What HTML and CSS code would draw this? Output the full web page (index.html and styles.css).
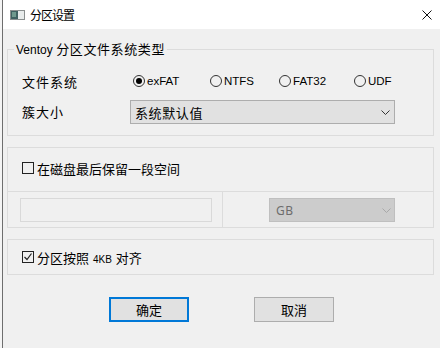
FILE: index.html
```html
<!DOCTYPE html>
<html lang="zh-CN">
<head>
    <meta charset="UTF-8">
    <title>分区设置</title>
    <link rel="stylesheet" href="styles.css">
</head>
<body>

<div class="window">
    <div class="titlebar">
        <svg class="app-icon" width="15" height="10" viewBox="0 0 15 10">
            <rect x="0.5" y="0.5" width="14" height="9" fill="#e8ecec" stroke="#8a8f8f"/>
            <rect x="1" y="1" width="7" height="8" fill="#3f6262"/>
            <rect x="2" y="2" width="4" height="5" fill="#6f9a8e"/>
        </svg>
        <span class="title">分区设置</span>
        <svg class="close" width="10" height="10" viewBox="0 0 10 10">
            <path d="M0.5 0.5 L9.5 9.5 M9.5 0.5 L0.5 9.5" stroke="#111" stroke-width="1"/>
        </svg>
    </div>

    <div class="content">
        <!-- 文件系统类型 -->
        <div class="group fs-group">
            <div class="group-title"><span class="latin">Ventoy</span> 分区文件系统类型</div>
            <div class="fs-rows">
                <div class="row">
                    <span class="row-label">文件系统</span>
                    <div class="radios">
                        <label class="radio"><span class="radio-circle checked"></span>exFAT</label>
                        <label class="radio"><span class="radio-circle"></span>NTFS</label>
                        <label class="radio"><span class="radio-circle"></span>FAT32</label>
                        <label class="radio"><span class="radio-circle"></span>UDF</label>
                    </div>
                </div>
                <div class="row">
                    <span class="row-label">簇大小</span>
                    <div class="combo">
                        <span>系统默认值</span>
                        <svg width="9" height="5" viewBox="0 0 9 5"><polyline points="0.5,0.5 4.5,4.5 8.5,0.5" fill="none" stroke="#333" stroke-width="1"/></svg>
                    </div>
                </div>
            </div>
        </div>

        <!-- 保留空间 -->
        <div class="group reserve">
            <div class="reserve-top">
                <span class="check"></span>
                <span>在磁盘最后保留一段空间</span>
            </div>
            <div class="reserve-bottom">
                <div class="cell cell-left">
                    <div class="text-input"></div>
                </div>
                <div class="cell cell-right">
                    <div class="combo combo-disabled">
                        <span>GB</span>
                        <svg width="9" height="5" viewBox="0 0 9 5"><polyline points="0.5,0.5 4.5,4.5 8.5,0.5" fill="none" stroke="#a8a8a8" stroke-width="1"/></svg>
                    </div>
                </div>
            </div>
        </div>

        <!-- 4KB 对齐 -->
        <div class="group align">
            <span class="check checked">
                <svg width="10" height="10" viewBox="0 0 10 10"><polyline points="1.5,5 4,7.5 8.5,1.5" fill="none" stroke="#222" stroke-width="1.2"/></svg>
            </span>
            <span>分区按照 <span class="small">4KB</span> 对齐</span>
        </div>

        <div class="buttons">
            <button class="btn btn-default">确定</button>
            <button class="btn">取消</button>
        </div>
    </div>
</div>

</body>
</html>
```

FILE: styles.css
```css
/* Dasar */
* {
    margin: 0;
    padding: 0;
    box-sizing: border-box;
}

body {
    width: 440px;
    height: 348px;
    overflow: hidden;
    background: #f4f4f4;
    font-family: "Noto Sans CJK SC", sans-serif;
    font-size: 13px;
    color: #000;
}

.window {
    margin-left: 2px;
    height: 348px;
    border-left: 1px solid #6e6e6e;
    background: #f0f0f0;
}

/* Title bar */
.titlebar {
    height: 29px;
    background: #fff;
    display: flex;
    align-items: center;
    padding-left: 7px;
}

.app-icon {
    display: block;
    margin-right: 5px;
}

.title {
    font-size: 12px;
    letter-spacing: -1px;
    line-height: 16px;
}

.close {
    display: block;
    margin-left: auto;
    margin-right: 8px;
}

/* Content */
.content {
    padding: 0 6px 0 4px;
}

.group {
    border: 1px solid #dcdcdc;
}

.group-title {
    width: fit-content;
    margin: -9px 0 0 6px;
    padding: 0 2px;
    line-height: 16px;
    background: #f0f0f0;
    letter-spacing: 0.6px;
}

.latin {
    font-family: "Liberation Sans", sans-serif;
    font-size: 12px;
    letter-spacing: 0;
}

.fs-group {
    margin-top: 20px;
    padding-bottom: 11px;
}

.fs-rows {
    display: grid;
    row-gap: 6px;
    padding: 12px 0 0 14px;
}

.row {
    display: flex;
    align-items: center;
    height: 24px;
}

.row-label {
    width: 108px;
    letter-spacing: 1px;
    line-height: 16px;
}

.radios {
    display: grid;
    grid-template-columns: 77px 69px 75px auto;
    margin-left: 3px;
    margin-top: -3px;
}

.radio {
    display: flex;
    align-items: center;
    gap: 2px;
    font-family: "Liberation Sans", sans-serif;
    font-size: 11.5px;
}

.radio-circle {
    width: 12px;
    height: 12px;
    border: 1px solid #333;
    border-radius: 50%;
    display: flex;
    align-items: center;
    justify-content: center;
}

.radio-circle.checked::after {
    content: "";
    width: 6px;
    height: 6px;
    border-radius: 50%;
    background: #000;
}

/* Combo */
.combo {
    width: 265px;
    height: 24px;
    background: #e1e1e1;
    border: 1px solid #adadad;
    display: flex;
    align-items: center;
    justify-content: space-between;
    padding: 0 4px 0 4px;
    letter-spacing: 0.6px;
}

.combo svg {
    display: block;
}

.combo-disabled {
    width: 126px;
    background: #cccccc;
    border-color: #bfbfbf;
    color: #6d6d6d;
    font-family: "Noto Sans", sans-serif;
    font-size: 12px;
    padding: 0 3px 0 6px;
}

/* Reserve */
.reserve {
    margin-top: 11px;
}

.reserve-top {
    height: 44px;
    border-bottom: 1px solid #dcdcdc;
    display: flex;
    align-items: center;
    gap: 3px;
    padding: 0 0 3px 14px;
}

.check {
    width: 12px;
    height: 12px;
    border: 1px solid #222;
    display: flex;
    align-items: center;
    justify-content: center;
}

.check svg {
    display: block;
}

.reserve-bottom {
    display: grid;
    grid-template-columns: 215px 1fr;
    height: 35px;
}

.cell-left {
    border-right: 1px solid #dcdcdc;
    padding: 6px 0 0 12px;
}

.cell-right {
    padding: 6px 0 0 46px;
}

.text-input {
    width: 192px;
    height: 24px;
    border: 1px solid #d9d9d9;
}

/* Align */
.align {
    margin-top: 11px;
    height: 36px;
    display: flex;
    align-items: center;
    gap: 3px;
    padding-left: 14px;
}

.small {
    font-family: "Liberation Sans", sans-serif;
    font-size: 10px;
    padding: 0 1px;
}

/* Buttons */
.buttons {
    display: flex;
    gap: 65px;
    margin-top: 22px;
    padding-left: 102px;
}

.btn {
    width: 80px;
    height: 25px;
    background: #e1e1e1;
    border: 1px solid #adadad;
    font-family: "Noto Sans CJK SC", sans-serif;
    font-size: 13px;
    color: #000;
}

.btn-default {
    border-color: #0078d7;
    box-shadow: inset 0 0 0 1px #0078d7;
}
```
